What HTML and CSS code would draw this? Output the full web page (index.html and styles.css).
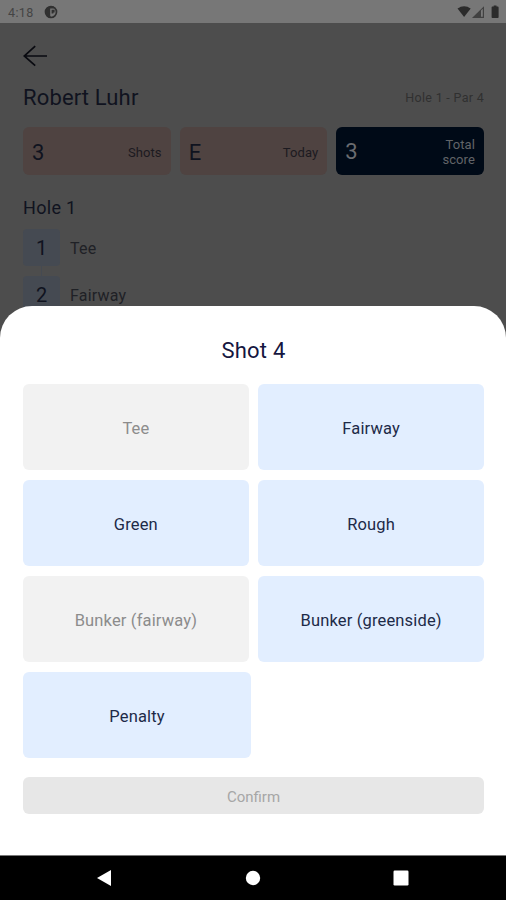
FILE: index.html
```html
<!DOCTYPE html>
<html lang="en">
<head>
    <meta charset="UTF-8">
    <meta name="viewport" content="width=device-width, initial-scale=1.0">
    <title>Robert Luhr - Hole 1</title>
    <link rel="stylesheet" href="styles.css">
</head>
<body>

<div class="status-bar">
    <span class="clock">4:18</span>
    <svg class="app-icon" width="14" height="14" viewBox="0 0 14 14">
        <circle cx="7" cy="7" r="5.5" fill="none" stroke="#303030" stroke-width="1.7"/>
        <path d="M1.5 7A5.5 5.5 0 0 1 7 1.5h3v2H6.2v7.2l1 1.8A5.5 5.5 0 0 1 1.5 7z" fill="#303030"/>
        <path d="M7.6 4.8h3v2.6h-1.2v1.2H7.6z" fill="#303030"/>
    </svg>
    <svg class="status-icons" width="44" height="16" viewBox="0 0 44 16">
        <path d="M0.5 4.6C4.5 1.3 9.7 1.3 13.7 4.6L7.1 13z" fill="#2b2b2b"/>
        <path d="M27 2.2V14H15z" fill="#414141"/>
        <path d="M24 6.6l1.8-1.8v8H24z" fill="#7a7a7a"/>
        <path d="M35.4 2.6h1.3V1.6h2.8v1h1.3q.8 0 .8.8v9.8q0 .8-.8.8h-5.4q-.8 0-.8-.8V3.4q0-.8.8-.8z" fill="#2b2b2b"/>
    </svg>
</div>

<div class="page">
    <svg class="back" width="26" height="22" viewBox="0 0 26 22">
        <path d="M12.2 1.2L1.2 11l11 9.6M1.2 11h22.8" fill="none" stroke="#090a10" stroke-width="1.7"/>
    </svg>

    <div class="player">
        <h1>Robert Luhr</h1>
        <span class="hole-info">Hole 1 - Par 4</span>
    </div>

    <div class="scores">
        <div class="score"><b>3</b><span>Shots</span></div>
        <div class="score"><b>E</b><span>Today</span></div>
        <div class="score total"><b>3</b><span>Total<br>score</span></div>
    </div>

    <h2>Hole 1</h2>
    <div class="shots">
        <div class="shot"><span class="number">1</span><span class="lie">Tee</span></div>
        <div class="line"></div>
        <div class="shot"><span class="number">2</span><span class="lie">Fairway</span></div>
    </div>
</div>

<div class="sheet">
    <h3>Shot 4</h3>
    <div class="options">
        <button class="option" disabled>Tee</button>
        <button class="option">Fairway</button>
        <button class="option">Green</button>
        <button class="option">Rough</button>
        <button class="option" disabled>Bunker (fairway)</button>
        <button class="option">Bunker (greenside)</button>
        <button class="option last">Penalty</button>
    </div>
    <button class="confirm" disabled>Confirm</button>
</div>

<div class="nav-bar">
    <svg width="16" height="18" viewBox="0 0 16 18"><path d="M1 9L15 1v16z" fill="#fff"/></svg>
    <svg width="16" height="16" viewBox="0 0 16 16"><circle cx="8" cy="8" r="7.2" fill="#fff"/></svg>
    <svg width="16" height="16" viewBox="0 0 16 16"><rect x="0.5" y="0.5" width="15" height="15" rx="1.2" fill="#fff"/></svg>
</div>

</body>
</html>
```
FILE: styles.css
```css
* {
    box-sizing: border-box;
}
body {
    margin: 0;
    height: 900px;
    display: flex;
    flex-direction: column;
    overflow: hidden;
    font-family: Roboto, sans-serif;
    background-color: #4d4d4d;
    color: #10131f;
}
h1, h2, h3 {
    margin: 0;
    font-weight: 400;
}
.status-bar {
    flex: none;
    height: 23px;
    padding: 0 5px 0 8px;
    display: flex;
    align-items: center;
    background-color: #777777;
}
.clock {
    width: 36px;
    padding-top: 1px;
    font-size: 12.5px;
    letter-spacing: 0.4px;
    color: #444444;
}
.status-icons {
    margin-left: auto;
}
.page {
    flex: none;
    height: 283px;
    padding: 22px 22px 0 23px;
}
.back {
    display: block;
}
.player {
    height: 59.5px;
    padding-top: 1px;
    display: flex;
    justify-content: space-between;
    align-items: center;
}
.player h1 {
    font-size: 22px;
    letter-spacing: 0.15px;
}
.hole-info {
    font-size: 12.5px;
    letter-spacing: 0.3px;
    color: #303030;
}
.scores {
    display: grid;
    grid-template-columns: repeat(3, 1fr);
    gap: 9px;
}
.score {
    height: 48.5px;
    padding: 3px 9px 0;
    border-radius: 6px;
    display: flex;
    justify-content: space-between;
    align-items: center;
    background-color: #4f4341;
}
.score b {
    font-size: 22px;
    font-weight: 400;
}
.score span {
    font-size: 13px;
    line-height: 15px;
    letter-spacing: 0.1px;
    text-align: right;
    color: #1c1a20;
}
.score.total {
    padding-top: 2px;
    background-color: #000a17;
    color: #6a6c70;
}
.score.total span {
    color: #626468;
}
.page h2 {
    margin: 21px 0 9px;
    font-size: 18px;
    line-height: 24px;
    letter-spacing: 0.3px;
}
.shot {
    display: flex;
    align-items: center;
    gap: 10px;
}
.number {
    width: 37px;
    height: 37px;
    border-radius: 4px;
    font-size: 20px;
    line-height: 39px;
    text-align: center;
    background-color: #454a52;
}
.lie {
    padding-top: 2px;
    font-size: 16px;
    letter-spacing: 0.2px;
    color: #1f2126;
}
.line {
    width: 1px;
    height: 10px;
    margin-left: 18px;
    background-color: #454a52;
}
/* bottom sheet */
.sheet {
    position: relative;
    flex: none;
    height: 549px;
    padding: 29px 22px 0 23px;
    border-radius: 32px 32px 0 0;
    background-color: #ffffff;
}
.sheet h3 {
    height: 48.5px;
    font-size: 22px;
    line-height: 31px;
    letter-spacing: 0.25px;
    text-align: center;
    color: #151640;
}
.options {
    display: grid;
    grid-template-columns: repeat(2, minmax(0, 1fr));
    gap: 9.5px;
}
.option {
    height: 86.5px;
    padding: 3px 0 0;
    border: none;
    border-radius: 6px;
    font-family: inherit;
    font-size: 16.5px;
    letter-spacing: 0.15px;
    background-color: #e2eeff;
    color: #1d2a48;
}
.option:disabled {
    background-color: #f2f2f2;
    color: #8c8c8c;
}
.option.last {
    width: 228px;
}
.confirm {
    display: block;
    width: 100%;
    height: 37px;
    margin-top: 19px;
    padding: 2px 0 0;
    border: none;
    border-radius: 6px;
    font-family: inherit;
    font-size: 15px;
    background-color: #e7e7e7;
    color: #a6a6a6;
}
.nav-bar {
    flex: none;
    height: 45px;
    padding: 0 97px 0 96px;
    border-top: 1px solid #777777;
    display: flex;
    justify-content: space-between;
    align-items: center;
    background-color: #000000;
}
```
